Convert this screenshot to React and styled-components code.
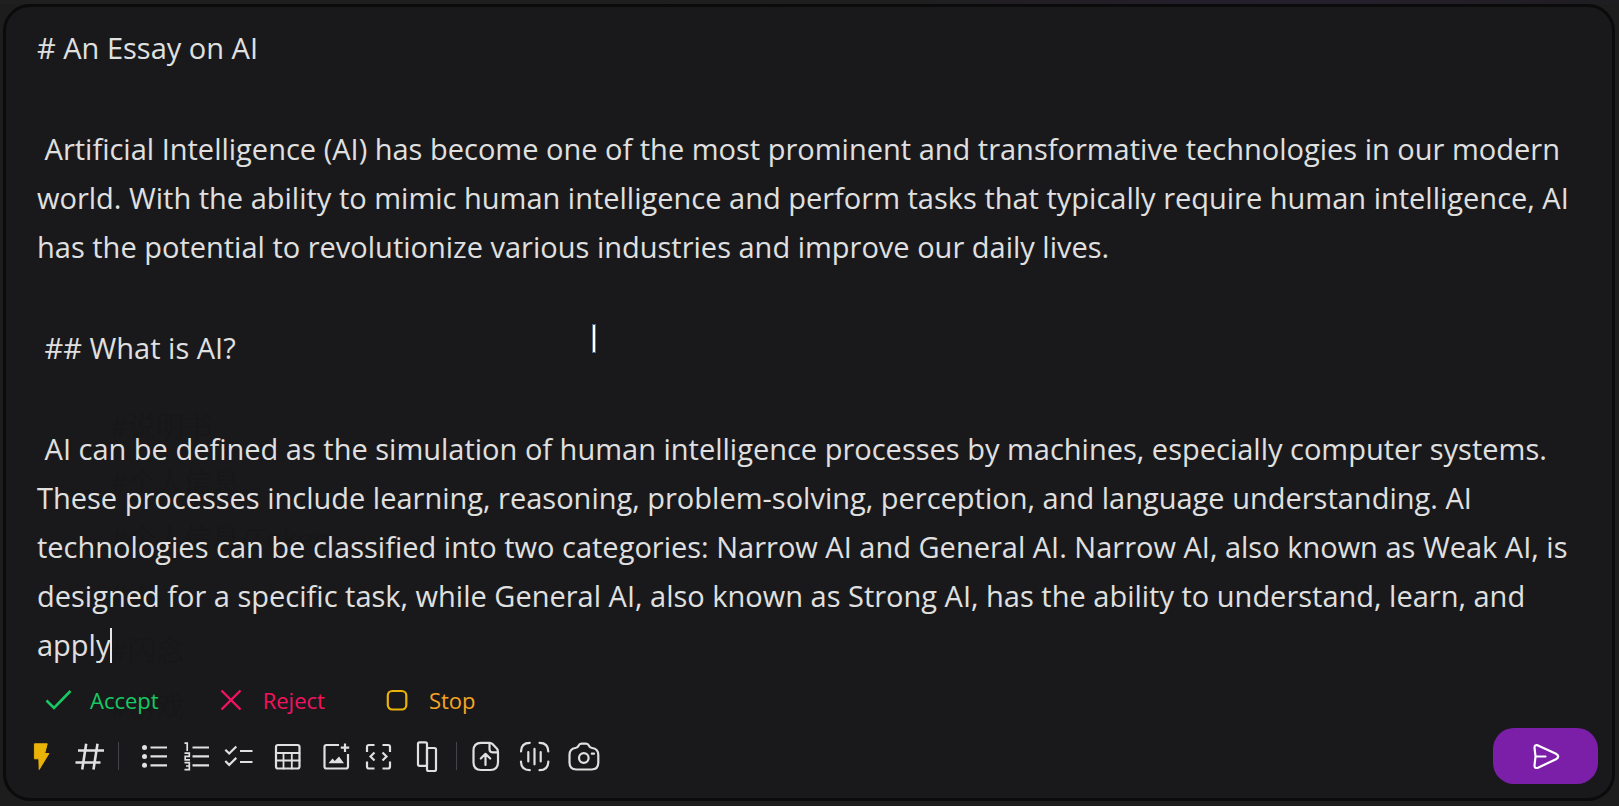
import React from "react";
import styled, { createGlobalStyle } from "styled-components";

const GlobalStyle = createGlobalStyle`
  *, *::before, *::after { box-sizing: border-box; }
  body {
    margin: 0;
    background: linear-gradient(90deg, #1f1f1f 0%, #1e1e1e 55%, #231e29 72%, #241f2a 85%, #1e1d21 100%) top / 100% 4px no-repeat, #1d1d1e;
    font-family: "Open Sans", "Noto Sans CJK SC", sans-serif;
    color: #e0e0e0;
  }
`;

const Composer = styled.main`
  position: relative;
  margin: 4px 4px 5px 3px;
  border: 3px solid #0b0b0c;
  border-radius: 27px;
  background: #19191b;
  overflow: hidden;
`;

const Backdrop = styled.ul`
  position: absolute;
  top: 391px;
  left: 104px;
  margin: 0;
  padding: 0;
  list-style: none;
  font-size: 28px;
  line-height: 56px;
  color: #171718;
`;

const Editor = styled.div`
  position: relative;
  padding: 16px 31px 0;
  font-size: 29px;
  line-height: 49px;
  white-space: pre-wrap;
  outline: none;
`;

const Paragraph = styled.p`
  margin: 0 0 52px;
  &:last-of-type { margin-bottom: 0; }
`;

const Caret = styled.span`
  display: inline-block;
  width: 2px;
  height: 35px;
  margin-right: -2px;
  vertical-align: -7px;
  background: #e6e6e6;
`;

const TextPointer = styled.span`
  position: absolute;
  left: 586px;
  top: 317px;
  width: 4px;
  height: 29px;
  border: 1px solid #4c6c94;
  background: #fff;
`;

const Review = styled.div`
  position: relative;
  display: flex;
  gap: 56px;
  padding: 15px 36px 0;
`;

const ReviewButton = styled.button`
  display: flex;
  align-items: center;
  gap: 16px;
  height: 32px;
  padding: 0;
  border: 0;
  background: none;
  color: ${(p) => p.$color};
  font: 22px/32px "Open Sans", sans-serif;
  cursor: pointer;
`;

const Toolbar = styled.div`
  position: relative;
  display: flex;
  align-items: center;
  padding: 12px 14px 14px 20px;
`;

const Group = styled.div`
  display: flex;
  align-items: center;
  gap: ${(p) => p.$gap}px;
`;

const IconButton = styled.button`
  display: grid;
  place-items: center;
  width: 32px;
  height: 32px;
  padding: 0;
  border: 0;
  background: none;
  color: ${(p) => p.$color || "#e0e0e0"};
  cursor: pointer;
`;

const Divider = styled.span`
  width: 1px;
  height: 28px;
  margin: 0 ${(p) => p.$after}px 0 ${(p) => p.$before}px;
  background: #424449;
`;

const SendButton = styled.button`
  display: grid;
  place-items: center;
  width: 105px;
  height: 56px;
  margin-left: auto;
  padding: 0;
  border: 0;
  border-radius: 21px;
  background: #7b1fa9;
  color: #fff;
  cursor: pointer;
`;

const Glyph = styled.svg`
  display: block;
  width: 32px;
  height: 32px;
  fill: none;
  stroke: currentColor;
  stroke-width: 2.2;
  stroke-linecap: round;
  stroke-linejoin: round;
`;

const shapes = {
  check: <path d="M4.500 16.500 12 24 28.500 7" strokeLinecap="butt" strokeLinejoin="miter" strokeWidth="2.600" />,
  cross: <path d="M6.500 6.500l19 19M25.500 6.500L6.500 25.500" strokeLinecap="butt" strokeWidth="2.400" />,
  square: <rect x="6.800" y="7" width="18.500" height="18.500" rx="4.500" stroke="#eab308" />,
  bolt: <path d="M8.800 3.800h12.400l-2.500 9.700h4.200L13.200 29.500 12.900 18.800H8.800z" fill="currentColor" strokeWidth="1" />,
  hash: <path d="M4 10.500H30M1.500 22.500h25M12.200 3.800 8.200 29.500M23.500 3.800l-4 25.700" strokeLinecap="butt" strokeWidth="2.600" />,
  bullets: (
    <>
      <g fill="currentColor" stroke="none">
        <circle cx="6.500" cy="7.500" r="2.500" />
        <circle cx="6.500" cy="16.400" r="2.500" />
        <circle cx="6.500" cy="25.300" r="2.500" />
      </g>
      <path d="M12.500 7.500H29M12.500 16.400H29M12.500 25.300H29" strokeLinecap="butt" />
    </>
  ),
  numbers: (
    <>
      <path d="M12.500 7.500H29M12.500 16.400H29M12.500 25.300H29" strokeLinecap="butt" />
      <path d="M4.500 3.200H7.200V11M4.500 13.200H9.300V16.400H5.200V19.800H10M4.500 22.700H9.300V29.700H4.500M6 26H9.300" strokeWidth="1.700" strokeLinecap="butt" strokeLinejoin="miter" />
    </>
  ),
  tasks: <path d="M3.300 9.800l3.900 3.700 7.100-7M3.300 21l3.900 3.900 7.100-7M18 11h12.500M18 22h12.500" strokeLinecap="butt" strokeLinejoin="miter" />,
  table: (
    <>
      <rect x="5" y="5" width="23.500" height="23.500" rx="2" />
      <path d="M5 13h23.500M5 20.500h23.500M12.500 13v15.500M20.800 13v15.500" strokeWidth="1.800" />
    </>
  ),
  image: (
    <>
      <path d="M19 5H6.500Q4.500 5 4.500 7V26.500Q4.500 28.500 6.500 28.500H26Q28 28.500 28 26.500V14M25 3.500V12M20.800 7.700H29.200" strokeLinecap="butt" />
      <path d="M8.500 23.200l4-4.700 2.300 2.500 4.200-4.500 5 6.700z" fill="currentColor" stroke="none" />
    </>
  ),
  code: <path d="M12.500 5H7Q5 5 5 7V12M20.500 5H26Q28 5 28 7V12M5 21.500V26.500Q5 28.500 7 28.500H12.500M28 21.500V26.500Q28 28.500 26 28.500H20.500M12.500 12.500l-4 4 4 4M20.500 12.500l4 4-4 4" strokeLinecap="butt" strokeLinejoin="miter" />,
  columns: (
    <>
      <rect x="7" y="2.300" width="9" height="23.500" rx="1.500" />
      <rect x="16" y="8" width="9" height="23" rx="1.500" />
    </>
  ),
  upload: <path d="M19.500 2.800H11Q3.500 2.800 3.500 10.500V22.300Q3.500 30 11 30H20.500Q28 30 28 22.300V12.300H22.500Q19.500 12.300 19.500 9.300V2.800Q21.300 2.800 22.500 4L27 8.800Q28 10 28 12.300M15.500 25V14M10.800 18.500l4.700-4.700 4.700 4.700" />,
  voice: <path d="M2 11.500Q2 2.800 10.800 2.800M20.500 2.800Q29.300 2.800 29.300 11.500M29.300 21.500Q29.300 30.200 20.500 30.200M10.800 30.200Q2 30.200 2 21.500M9.300 12v9.500M15.500 8.800v15.500M21.700 12v9.500" />,
  camera: (
    <>
      <path d="M10.500 5.700Q11.500 3.700 13.500 3.700H18Q20 3.700 21 5.700 22 7.900 24 8 30.300 8.700 30.300 15V22.500Q30.300 29.500 23.500 29.500H8.300Q1.500 29.500 1.500 22.500V15Q1.500 8.700 7.500 8 9.500 7.900 10.500 5.700zM23.800 13.700H26" />
      <circle cx="15.800" cy="18" r="4.800" />
    </>
  ),
  send: <path d="M4.500 7.700Q4.500 4.200 8 5.400L26 13.800Q30.500 16.500 26 19.200L8 27.700Q4.500 28.800 4.500 25.500L5.500 16.500zM5.500 16.500H15.500" />,
};

const Icon = ({ name }) => (
  <Glyph viewBox="0 0 32 32" aria-hidden="true">{shapes[name]}</Glyph>
);

const Tool = ({ name, label, color }) => (
  <IconButton type="button" aria-label={label} $color={color}>
    <Icon name={name} />
  </IconButton>
);

const tags = ["#说明书", "#个人信息", "#个人信息/Token", "#d", "#闪念", "#游戏"];

export default function App() {
  return (
    <>
      <GlobalStyle />
      <Composer>
        <Backdrop aria-hidden="true">
          {tags.map((tag) => <li key={tag}>{tag}</li>)}
        </Backdrop>
        <Editor role="textbox" aria-multiline="true" aria-label="Note" contentEditable suppressContentEditableWarning spellCheck={false}>
          <Paragraph># An Essay on AI</Paragraph>
          <Paragraph>{" Artificial Intelligence (AI) has become one of the most prominent and transformative technologies in our modern world. With the ability to mimic human intelligence and perform tasks that typically require human intelligence, AI has the potential to revolutionize various industries and improve our daily lives."}</Paragraph>
          <Paragraph>{" ## What is AI?"}</Paragraph>
          <Paragraph>
            {" AI can be defined as the simulation of human intelligence processes by machines, especially computer systems. These processes include learning, reasoning, problem-solving, perception, and language understanding. AI technologies can be classified into two categories: Narrow AI and General AI. Narrow AI, also known as Weak AI, is designed for a specific task, while General AI, also known as Strong AI, has the ability to understand, learn, and apply"}
            <Caret />
          </Paragraph>
        </Editor>
        <Review>
          <ReviewButton type="button" $color="#17c964"><Icon name="check" />Accept</ReviewButton>
          <ReviewButton type="button" $color="#f31260"><Icon name="cross" />Reject</ReviewButton>
          <ReviewButton type="button" $color="#f5a524"><Icon name="square" />Stop</ReviewButton>
        </Review>
        <Toolbar role="toolbar" aria-label="Formatting">
          <Group $gap={16}>
            <Tool name="bolt" label="AI writing" color="#eab308" />
            <Tool name="hash" label="Add tag" />
          </Group>
          <Divider $before={12} $after={19} />
          <Group $gap={17}>
            <Group $gap={10}>
              <Tool name="bullets" label="Bulleted list" />
              <Tool name="numbers" label="Numbered list" />
              <Tool name="tasks" label="Task list" />
            </Group>
            <Tool name="table" label="Table" />
            <Group $gap={10}>
              <Tool name="image" label="Add image" />
              <Tool name="code" label="Code block" />
            </Group>
            <Tool name="columns" label="Columns" />
          </Group>
          <Divider $before={13} $after={13} />
          <Group $gap={17}>
            <Tool name="upload" label="Upload file" />
            <Tool name="voice" label="Record audio" />
            <Tool name="camera" label="Take photo" />
          </Group>
          <SendButton type="button" aria-label="Send"><Icon name="send" /></SendButton>
        </Toolbar>
        <TextPointer aria-hidden="true" />
      </Composer>
    </>
  );
}
